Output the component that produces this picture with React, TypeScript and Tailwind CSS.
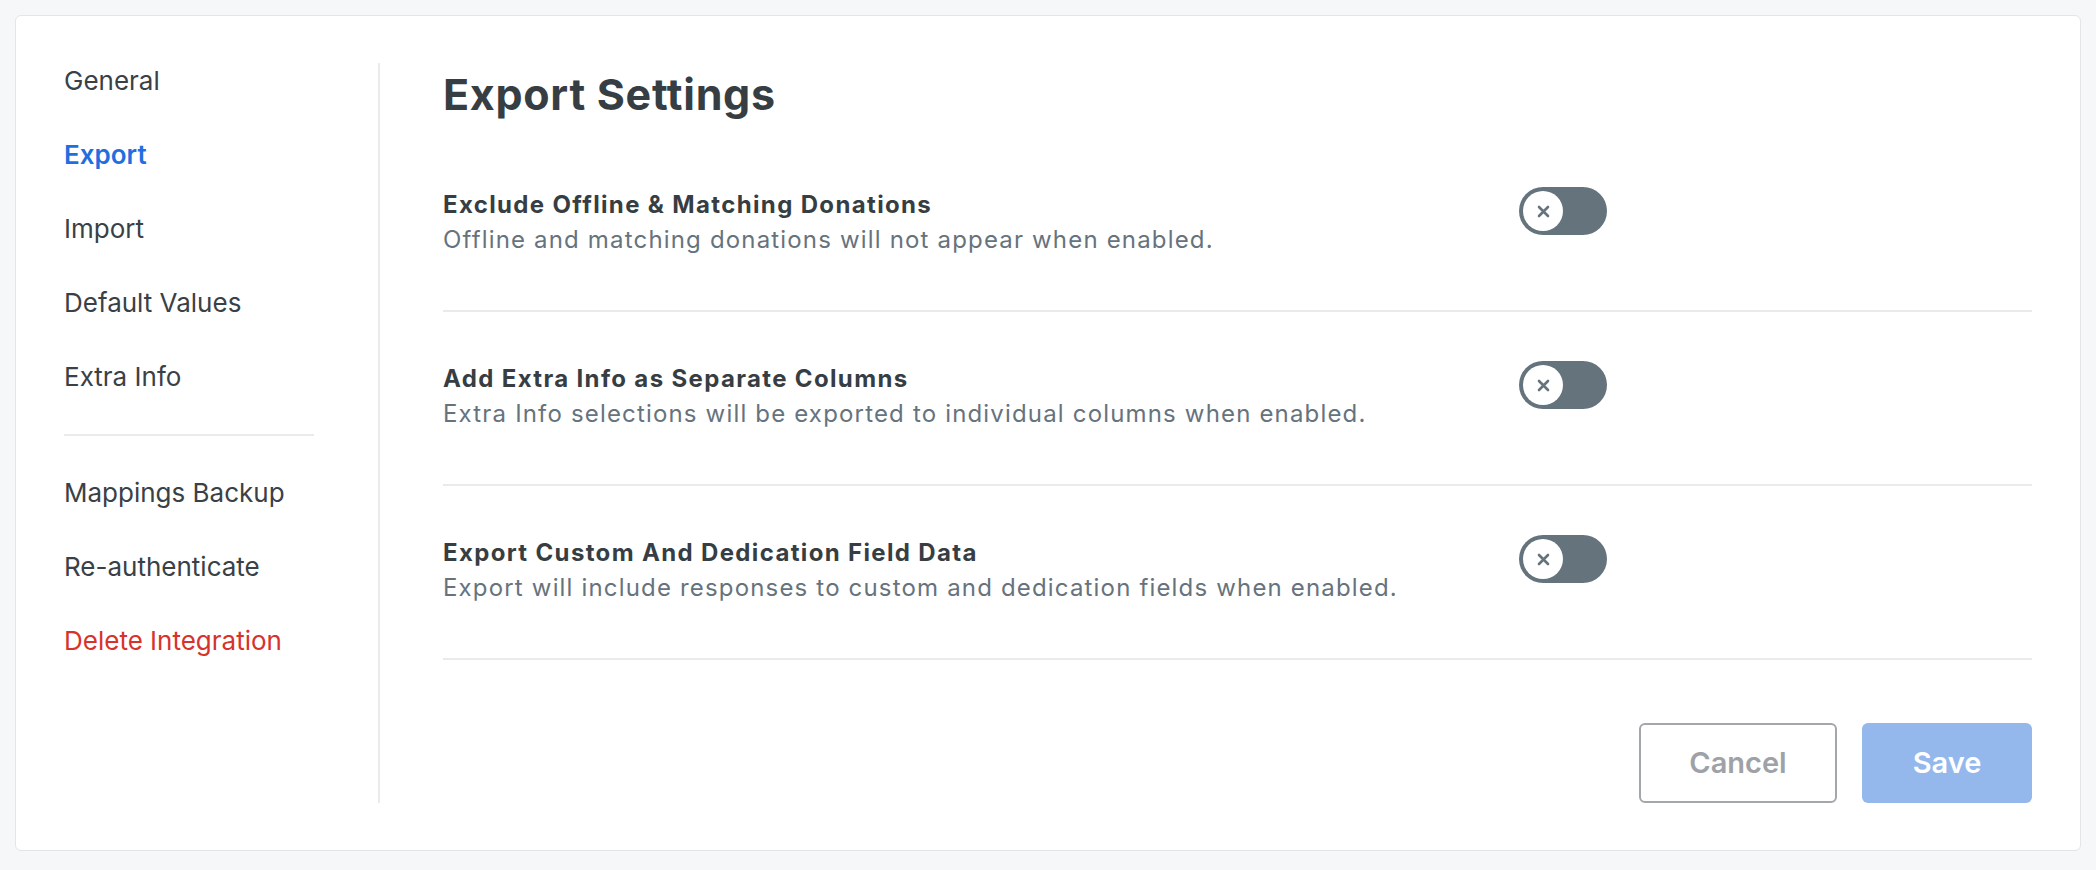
import React from 'react';

interface Setting {
  id: string;
  title: string;
  description: string;
}

const settings: Setting[] = [
  {
    id: 'exclude-offline',
    title: 'Exclude Offline & Matching Donations',
    description: 'Offline and matching donations will not appear when enabled.',
  },
  {
    id: 'extra-info-columns',
    title: 'Add Extra Info as Separate Columns',
    description: 'Extra Info selections will be exported to individual columns when enabled.',
  },
  {
    id: 'custom-fields',
    title: 'Export Custom And Dedication Field Data',
    description: 'Export will include responses to custom and dedication fields when enabled.',
  },
];

function Toggle() {
  return (
    <button className="flex h-[48px] w-[88px] shrink-0 items-center rounded-full bg-[#65737d] p-[4px]">
      <span className="flex h-[40px] w-[40px] items-center justify-center rounded-full bg-white">
        <svg width="13" height="13" viewBox="0 0 13 13" fill="none">
          <path d="M2 2L11 11M11 2L2 11" stroke="#65737d" strokeWidth="2.6" strokeLinecap="round" />
        </svg>
      </span>
    </button>
  );
}

function NavItem({ label, active, danger }: { label: string; active?: boolean; danger?: boolean }) {
  let color = 'text-[#3a4146]';
  if (active) color = 'text-[#1f6fe0] font-semibold';
  if (danger) color = 'text-[#d7322b]';
  return <a className={`block text-[26px] leading-[36px] ${color}`}>{label}</a>;
}

export default function App() {
  return (
    <div className="min-h-[870px] bg-[#f6f7f9] p-[15px] font-['Inter',sans-serif]">
      <div className="flex rounded-md border border-[#e3e5e8] bg-white px-[48px] pt-[47px] pb-[47px]">
        {/* menu lateral */}
        <nav className="flex w-[316px] shrink-0 flex-col gap-[38px] border-r-2 border-[#e9eaec] pr-[64px]">
          <NavItem label="General" />
          <NavItem label="Export" active />
          <NavItem label="Import" />
          <NavItem label="Default Values" />
          <NavItem label="Extra Info" />
          <div className="my-[1px] h-[2px] bg-[#e9eaec]" />
          <NavItem label="Mappings Backup" />
          <NavItem label="Re-authenticate" />
          <NavItem label="Delete Integration" danger />
        </nav>

        <div className="flex-1 pl-[63px]">
          <h1 className="mb-[13px] text-[43px] font-bold leading-[62px] tracking-[0.7px] text-[#373e43]">
            Export Settings
          </h1>

          {settings.map(s => (
            <div key={s.id} className="flex items-start border-b-2 border-[#e9eaec] pt-[49px] pb-[53px]">
              <div className="w-[1076px] shrink-0">
                <div className="text-[24px] font-bold leading-[35px] tracking-[1.35px] text-[#373e43]">{s.title}</div>
                <div className="text-[24px] leading-[35px] tracking-[1.17px] text-[#66737d]">{s.description}</div>
              </div>
              <Toggle />
            </div>
          ))}

          <div className="mt-[63px] flex justify-end gap-[25px]">
            <button className="h-[80px] w-[198px] rounded-[6px] border-2 border-[#a3a7ab] bg-white text-[29px] font-semibold text-[#9ea2a6]">
              Cancel
            </button>
            <button className="h-[80px] w-[170px] rounded-[6px] bg-[#94b8ec] text-[29px] font-semibold text-white">
              Save
            </button>
          </div>
        </div>
      </div>
    </div>
  );
}
